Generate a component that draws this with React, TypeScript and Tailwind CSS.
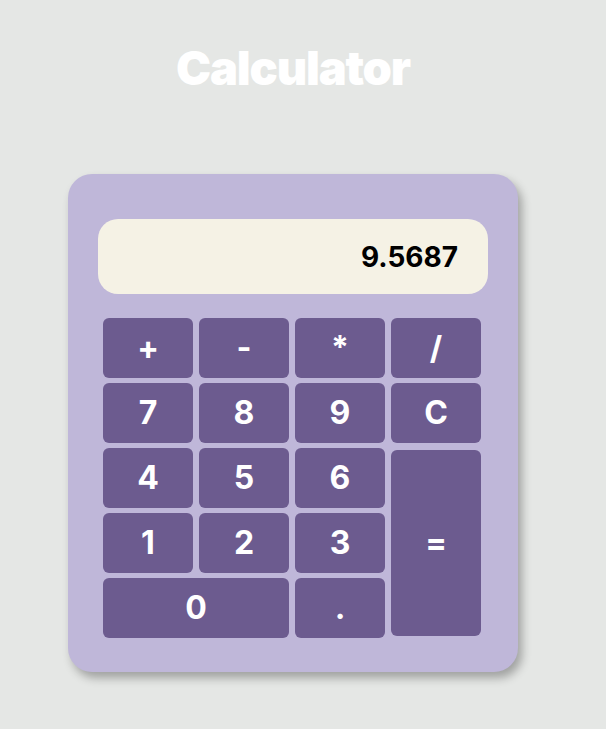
export default function App() {
  const keys: { label: string; className?: string }[] = [
    { label: "+" },
    { label: "-" },
    { label: "*" },
    { label: "/" },
    { label: "7" },
    { label: "8" },
    { label: "9" },
    { label: "C" },
    { label: "4" },
    { label: "5" },
    { label: "6" },
    { label: "=", className: "row-span-3 my-[2px]" },
    { label: "1" },
    { label: "2" },
    { label: "3" },
    { label: "0", className: "col-span-2" },
    { label: "." },
  ];

  return (
    <div className="min-h-screen bg-[#e5e7e5] font-['Inter',sans-serif]">
      <div className="w-[450px] ml-[68px] pt-[40px]">
        <h1 className="text-center text-white text-[47px] leading-[56px] font-black tracking-[-1.2px]">
          Calculator
        </h1>

        <div className="mt-[78px] bg-[#bfb7d9] rounded-[24px] px-[30px] pt-[45px] pb-[34px] shadow-[4px_6px_10px_rgba(0,0,0,0.3)]">
          {/* display */}
          <div className="h-[75px] bg-[#f5f2e5] rounded-[20px] flex items-center justify-end pr-[30px]">
            <span className="text-[28px] font-bold text-black">9.5687</span>
          </div>

          {/* keys */}
          <div className="mt-[24px] mx-[5px] grid grid-cols-[repeat(4,90px)] auto-rows-[60px] gap-x-[6px] gap-y-[5px]">
            {keys.map((k) => (
              <button
                key={k.label}
                className={`bg-[#6c5b8f] rounded-[6px] text-white text-[32px] font-bold flex items-center justify-center ${k.className ?? ""}`}
              >
                {k.label}
              </button>
            ))}
          </div>
        </div>
      </div>
    </div>
  );
}
